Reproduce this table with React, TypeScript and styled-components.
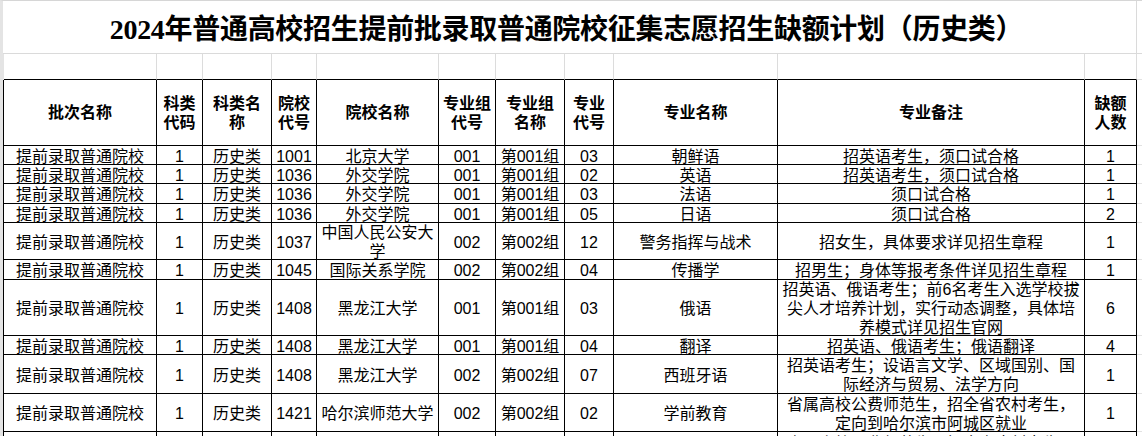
import React from "react";
import styled, { createGlobalStyle } from "styled-components";

// column widths measured from the sheet (px, right border included)
const COLS = [153, 46, 69, 45, 122, 57, 69, 49, 164, 307, 52];
const template = COLS.map((w) => `${w}px`).join(" ") + " 1fr";

type Entry = {
  h: number;
  cells: string[];
  note: string[];
  quota: string;
};

const HEADERS: string[][] = [
  ["批次名称"],
  ["科类", "代码"],
  ["科类名", "称"],
  ["院校", "代号"],
  ["院校名称"],
  ["专业组", "代号"],
  ["专业组", "名称"],
  ["专业", "代号"],
  ["专业名称"],
  ["专业备注"],
  ["缺额", "人数"],
];

const base = ["提前录取普通院校", "1", "历史类"];

const ROWS: Entry[] = [
  { h: 19, cells: [...base, "1001", "北京大学", "001", "第001组", "03", "朝鲜语"], note: ["招英语考生，须口试合格"], quota: "1" },
  { h: 19, cells: [...base, "1036", "外交学院", "001", "第001组", "02", "英语"], note: ["招英语考生，须口试合格"], quota: "1" },
  { h: 20, cells: [...base, "1036", "外交学院", "001", "第001组", "03", "法语"], note: ["须口试合格"], quota: "1" },
  { h: 19, cells: [...base, "1036", "外交学院", "001", "第001组", "05", "日语"], note: ["须口试合格"], quota: "2" },
  { h: 37, cells: [...base, "1037", "中国人民公安大\n学", "002", "第002组", "12", "警务指挥与战术"], note: ["招女生，具体要求详见招生章程"], quota: "1" },
  { h: 20, cells: [...base, "1045", "国际关系学院", "002", "第002组", "04", "传播学"], note: ["招男生；身体等报考条件详见招生章程"], quota: "1" },
  {
    h: 56,
    cells: [...base, "1408", "黑龙江大学", "001", "第001组", "03", "俄语"],
    note: ["招英语、俄语考生；前6名考生入选学校拔", "尖人才培养计划，实行动态调整，具体培", "养模式详见招生官网"],
    quota: "6",
  },
  { h: 19, cells: [...base, "1408", "黑龙江大学", "001", "第001组", "04", "翻译"], note: ["招英语、俄语考生；俄语翻译"], quota: "4" },
  {
    h: 39,
    cells: [...base, "1408", "黑龙江大学", "002", "第002组", "07", "西班牙语"],
    note: ["招英语考生；设语言文学、区域国别、国", "际经济与贸易、法学方向"],
    quota: "1",
  },
  {
    h: 38,
    cells: [...base, "1421", "哈尔滨师范大学", "002", "第002组", "02", "学前教育"],
    note: ["省属高校公费师范生，招全省农村考生，", "定向到哈尔滨市阿城区就业"],
    quota: "1",
  },
  {
    // only the top of the remark shows at the bottom edge of the window
    h: 60,
    cells: ["", "", "", "", "", "", "", "", ""],
    note: ["省属高校公费师范生，招全省农村考生，"],
    quota: "",
  },
];

const GlobalStyle = createGlobalStyle`
  html, body {
    margin: 0;
    padding: 0;
    background: #fff;
    overflow: hidden;
  }
  body {
    font-family: "Liberation Sans", "Noto Sans CJK SC", sans-serif;
    color: #000;
  }
`;

const Sheet = styled.div`
  width: 1142px;
  height: 436px;
  box-sizing: border-box;
  border-left: 3px solid #e4e4e4;
  border-top: 1px solid #d6d6d6;
  overflow: hidden;
  display: flex;
  flex-direction: column;
`;

const TitleRow = styled.div`
  display: grid;
  grid-template-columns: 1134px 1fr;
  height: 53px;
  flex-shrink: 0;
`;

const Title = styled.h1`
  margin: 0;
  box-sizing: border-box;
  border-right: 1px solid #dadada;
  border-bottom: 1px solid #dadada;
  display: flex;
  align-items: center;
  justify-content: center;
  padding-right: 6px;
  font-family: "Liberation Serif", "Noto Sans CJK SC", serif;
  font-size: 28px;
  font-weight: 700;
  letter-spacing: -0.3px;
`;

const Filler = styled.div<{ $line?: string }>`
  border-bottom: 1px solid ${(p) => p.$line ?? "#e2e2e2"};
`;

const Row = styled.div<{ $h: number; $edge: string }>`
  display: grid;
  grid-template-columns: ${template};
  height: ${(p) => p.$h}px;
  flex-shrink: 0;
  border-left: 1px solid ${(p) => p.$edge};
`;

const Blank = styled.div`
  box-sizing: border-box;
  border-right: 1px solid #dcdcdc;
  border-bottom: 1px solid #000;
`;

const Cell = styled.div<{ $bold?: boolean; $top?: boolean }>`
  box-sizing: border-box;
  border-right: 1px solid #000;
  border-bottom: 1px solid #000;
  display: flex;
  align-items: ${(p) => (p.$top ? "flex-start" : "center")};
  justify-content: center;
  text-align: center;
  overflow: hidden;
  white-space: nowrap;
  padding: ${(p) => (p.$bold ? "0" : "2px 0 0")};
  font-size: 16px;
  line-height: 19px;
  font-weight: ${(p) => (p.$bold ? 700 : 400)};
`;

const Lines = ({ lines }: { lines: string[] }) => (
  <span>
    {lines.map((l, i) => (
      <React.Fragment key={i}>
        {i > 0 && <br />}
        {l}
      </React.Fragment>
    ))}
  </span>
);

export default function App() {
  return (
    <>
      <GlobalStyle />
      <Sheet>
        <TitleRow>
          <Title>2024年普通高校招生提前批录取普通院校征集志愿招生缺额计划（历史类）</Title>
          <Filler $line="#dadada" />
        </TitleRow>

        <Row $h={26} $edge="#e4e4e4">
          {COLS.map((_, i) => (
            <Blank key={i} />
          ))}
          <Filler />
        </Row>

        <Row $h={66} $edge="#000">
          {HEADERS.map((h, i) => (
            <Cell key={i} $bold>
              <Lines lines={h} />
            </Cell>
          ))}
          <Filler />
        </Row>

        {ROWS.map((r, i) => (
          <Row key={i} $h={r.h} $edge="#000">
            {r.cells.map((c, j) => (
              <Cell key={j}>
                <Lines lines={c.split("\n")} />
              </Cell>
            ))}
            <Cell $top={i === ROWS.length - 1}>
              <Lines lines={r.note} />
            </Cell>
            <Cell>{r.quota}</Cell>
            <Filler />
          </Row>
        ))}
      </Sheet>
    </>
  );
}
